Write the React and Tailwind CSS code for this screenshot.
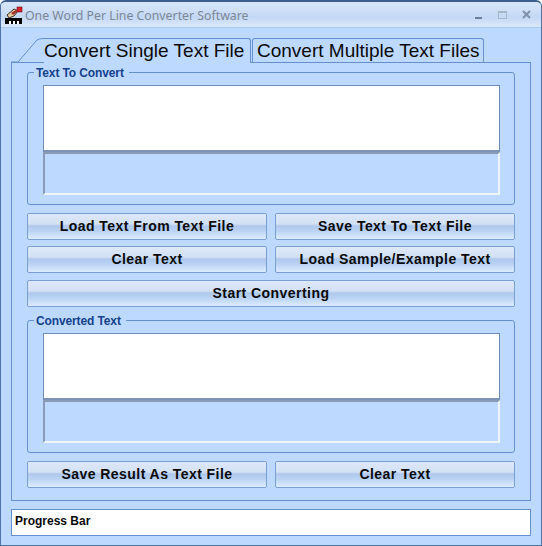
import React from 'react';

const btn = "h-[27px] rounded-[2px] border border-[#7c9fd3] bg-[linear-gradient(180deg,#dde8f8_0%,#d3e1f5_40%,#aec8ec_48%,#bcd4f4_70%,#dcecfd_100%)] text-[14px] font-bold tracking-[0.45px] text-[#0a0a0a] flex items-center justify-center";

const AppIcon = () => (
  <svg width="18" height="18" viewBox="0 0 18 18" className="shrink-0">
    <path d="M2 9 L9 3 L13 5 L9 10 L4 12 Z" fill="#e8c9a0" stroke="#3a2a20" strokeWidth="1" />
    <path d="M6 7 L11 4 L12 6 L8 9 Z" fill="#a03028" />
    <rect x="12" y="1" width="5" height="5" fill="#d8202a" stroke="#701015" strokeWidth="0.6" />
    <rect x="0" y="12" width="17" height="6" fill="#000" />
    <rect x="4" y="15" width="2" height="3" fill="#fff" />
    <rect x="8" y="15" width="2" height="3" fill="#fff" />
    <rect x="12" y="15" width="2" height="3" fill="#fff" />
  </svg>
);

const TextGroup = ({ title }) => (
  <fieldset className="h-[139px] rounded-[3px] border border-[#658fcf] pl-[15px] pr-[14px] pt-[6px] pb-[10px] min-w-0">
    <legend className="ml-[-9px] px-[2px] pr-[5px] text-[12px] leading-[13px] font-bold tracking-[-0.12px] text-[#15428b]"><span className="relative top-[1px]">{title}</span></legend>
    <div className="h-[67px] border border-[#6d8cb8] border-b-[#7d93b8] border-b-2 bg-white" />
    <div className="h-[43px] border-2 border-t-[#8a9bb8] border-l-[#8a9bb8] border-r-[#eef5fd] border-b-[#eef5fd] bg-[#bed9ff]" />
  </fieldset>
);

export default function App() {
  return (
    <div className="w-[542px] h-[546px] overflow-hidden flex flex-col rounded-t-[6px] border-x border-b border-[#4f74a8] border-t-2 border-t-[#3c5f90] bg-[#bed9ff] font-['Liberation_Sans',sans-serif]">
      {/* title bar */}
      <div className="h-[26px] shrink-0 flex items-center pl-[4px] pr-[10px] border-b border-[#a9c8ee] bg-[linear-gradient(180deg,#d6e5f9_0%,#cfe0f7_30%,#c3d8f4_60%,#dbe8fa_100%)]">
        <AppIcon />
        <span className="ml-[2px] mt-[4px] text-[12.3px] text-[#7b8797] font-['Noto_Sans',sans-serif] whitespace-nowrap">One Word Per Line Converter Software</span>
        <div className="ml-auto flex items-center gap-[15px]">
          <div className="w-[7px] h-[2px] mt-[7px] bg-[#6c7f99] mr-[1px]" />
          <div className="w-[9px] h-[8px] border border-[#a8b6ca] border-t-2" />
          <svg width="9" height="9" viewBox="0 0 9 9"><path d="M1 1 L8 8 M8 1 L1 8" stroke="#7f90a8" strokeWidth="2" /></svg>
        </div>
      </div>

      {/* tabs */}
      <div className="pt-[10px] px-[10px]">
        <div className="relative flex h-[24px] pl-[33px] gap-[1px] items-stretch">
          <svg width="34" height="25" viewBox="0 0 34 25" className="absolute left-0 top-0">
            <path d="M0 24 H7 L26 2 Q28 0.5 33 0.5" fill="#bed9ff" stroke="#658fcf" />
          </svg>
          <div className="relative z-10 w-[207px] h-[25px] rounded-tr-[3px] border-t border-r border-[#658fcf] bg-[#bed9ff] text-[19px] leading-[24px] whitespace-nowrap text-[#0a0a0a]">Convert Single Text File</div>
          <div className="w-[232px] rounded-t-[3px] border border-b-0 border-[#658fcf] bg-[#bed9ff] pl-[4px] text-[19px] leading-[24px] whitespace-nowrap text-[#0a0a0a]">Convert Multiple Text Files</div>
        </div>

        {/* tab page */}
        <div className="w-[520px] h-[439px] border border-[#658fcf] px-[15px] pt-[3px]">
          <TextGroup title="Text To Convert" />
          <div className="mt-[8px] grid grid-cols-2 gap-x-[8px] gap-y-[6px]">
            <button className={btn}>Load Text From Text File</button>
            <button className={btn}>Save Text To Text File</button>
            <button className={btn}>Clear Text</button>
            <button className={btn}>Load Sample/Example Text</button>
            <button className={`${btn} col-span-2 mt-[1px]`}>Start Converting</button>
          </div>
          <div className="mt-[7px]">
            <TextGroup title="Converted Text" />
          </div>
          <div className="mt-[8px] grid grid-cols-2 gap-x-[8px]">
            <button className={btn}>Save Result As Text File</button>
            <button className={btn}>Clear Text</button>
          </div>
        </div>

        {/* progress */}
        <div className="mt-[8px] w-[520px] h-[27px] border border-[#658fcf] bg-white pl-[3px] pb-[3px] text-[12px] font-bold text-[#0a0a0a] flex items-center">
          Progress Bar
        </div>
      </div>
    </div>
  );
}
